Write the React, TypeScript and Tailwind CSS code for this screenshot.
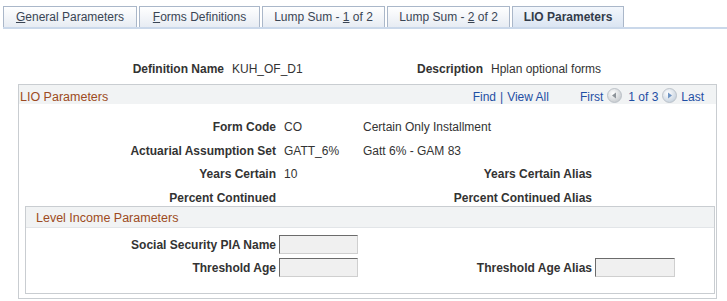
import React from "react";

const font = { fontFamily: '"Liberation Sans", Arial, sans-serif' };

function Tab({ w, children, active }: { w: string; children: React.ReactNode; active?: boolean }) {
  return (
    <div
      className={`${w} h-[21px] flex items-center justify-center border border-b-0 border-[#aab7c9] text-[12px] leading-none ${
        active
          ? "bg-gradient-to-b from-[#f3f7fc] to-[#dbe5f2] font-bold text-[#333c4a]"
          : "bg-gradient-to-b from-white to-[#e7ecf3] text-[#3a4554]"
      }`}
    >
      {children}
    </div>
  );
}

function NavBtn({ dir }: { dir: "left" | "right" }) {
  const id = dir === "left" ? "gl" : "gr";
  return (
    <svg width="15" height="15" viewBox="0 0 15 15" className="block">
      <defs>
        <radialGradient id={id} cx="40%" cy="35%" r="70%">
          <stop offset="0%" stopColor="#ffffff" />
          <stop offset="100%" stopColor={dir === "left" ? "#c4c8cc" : "#c3cfdc"} />
        </radialGradient>
      </defs>
      <circle cx="7.5" cy="7.5" r="7" fill={`url(#${id})`} stroke="#b4bac1" strokeWidth="0.8" />
      {dir === "left" ? (
        <path d="M5 7.5 L9 4.5 L9 10.5 Z" fill="#8d9399" />
      ) : (
        <path d="M10 7.5 L6 4.5 L6 10.5 Z" fill="#6f95c4" />
      )}
    </svg>
  );
}

function Input({ w = "w-[79px]" }: { w?: string }) {
  return (
    <div className={`${w} h-[19px] bg-[#f0f0f0] border border-t-[#6b6b6b] border-l-[#6b6b6b] border-b-[#cfcfcf] border-r-[#cfcfcf]`} />
  );
}

export default function App() {
  return (
    <div className="w-[727px] h-[301px] bg-white text-[12px] text-[#333] overflow-hidden relative" style={font}>
      {/* Tabs */}
      <div className="pt-[6px] pl-[3px]">
        <div className="flex items-end gap-[2px]">
          <Tab w="w-[134px]">
            <span>
              <span className="underline">G</span>eneral Parameters
            </span>
          </Tab>
          <Tab w="w-[121px]">
            <span>
              <span className="underline">F</span>orms Definitions
            </span>
          </Tab>
          <Tab w="w-[123px]">
            <span>
              Lump Sum - <span className="underline">1</span> of 2
            </span>
          </Tab>
          <Tab w="w-[123px]">
            <span>
              Lump Sum - <span className="underline">2</span> of 2
            </span>
          </Tab>
          <Tab w="w-[112px]" active>
            LIO Parameters
          </Tab>
        </div>
        <div className="h-[2px] bg-[#cad8ea]" />
      </div>

      {/* Definition row */}
      <div className="flex items-center h-[14px] mt-[33px] leading-[14px]">
        <div className="w-[224px] text-right font-bold">Definition Name</div>
        <div className="w-[193px] pl-[8px]">KUH_OF_D1</div>
        <div className="w-[65px] text-right font-bold">Description</div>
        <div className="pl-[9px]">Hplan optional forms</div>
      </div>

      {/* Outer box */}
      <div className="ml-[18px] w-[699px] mt-[8px] border border-[#c9cdd1] pb-[4px]">
        <div className="h-[19px] bg-[#f1f3f4] flex items-start pt-[5px] leading-[14px] text-[12px]">
          <div className="pl-[1px] text-[#9d4b22] text-[12.5px]">LIO Parameters</div>
          <div className="ml-auto flex items-center h-[14px] text-[#1f4fa4]">
            <span>Find</span>
            <span className="px-[4px]">|</span>
            <span>View All</span>
            <span className="ml-[31px]">First</span>
            <span className="ml-[4px] mt-[-4px]">
              <NavBtn dir="left" />
            </span>
            <span className="ml-[6px]">1 of 3</span>
            <span className="ml-[4px] mt-[-4px]">
              <NavBtn dir="right" />
            </span>
            <span className="ml-[4px] mr-[12px]">Last</span>
          </div>
        </div>

        <div className="leading-[14px]">
          <div className="flex h-[14px] mt-[16px]">
            <div className="w-[257px] text-right font-bold">Form Code</div>
            <div className="w-[87px] pl-[8px]">CO</div>
            <div>Certain Only Installment</div>
          </div>
          <div className="flex h-[14px] mt-[10px]">
            <div className="w-[257px] text-right font-bold">Actuarial Assumption Set</div>
            <div className="w-[87px] pl-[8px]">GATT_6%</div>
            <div>Gatt 6% - GAM 83</div>
          </div>
          <div className="flex h-[14px] mt-[9px]">
            <div className="w-[257px] text-right font-bold">Years Certain</div>
            <div className="w-[87px] pl-[8px]">10</div>
            <div className="w-[229px] text-right font-bold">Years Certain Alias</div>
          </div>
          <div className="flex h-[14px] mt-[10px]">
            <div className="w-[257px] text-right font-bold">Percent Continued</div>
            <div className="w-[87px] pl-[8px]"></div>
            <div className="w-[229px] text-right font-bold">Percent Continued Alias</div>
          </div>
        </div>

        {/* Inner box */}
        <div className="ml-[6px] mr-[1px] mt-[1px] border border-[#c9cdd1] h-[88px]">
          <div className="h-[21px] bg-[#f1f3f4] border-b border-[#e2e5e8] pt-[4px] leading-[14px]">
            <div className="pl-[10px] text-[#9d4b22] text-[12.5px]">Level Income Parameters</div>
          </div>
          <div className="flex items-center mt-[7px]">
            <div className="w-[250px] text-right font-bold">Social Security PIA Name</div>
            <div className="ml-[3px]">
              <Input />
            </div>
          </div>
          <div className="flex items-center mt-[4px]">
            <div className="w-[250px] text-right font-bold">Threshold Age</div>
            <div className="ml-[3px]">
              <Input />
            </div>
            <div className="w-[234px] text-right font-bold">Threshold Age Alias</div>
            <div className="ml-[3px]">
              <Input w="w-[80px]" />
            </div>
          </div>
        </div>
      </div>
    </div>
  );
}
